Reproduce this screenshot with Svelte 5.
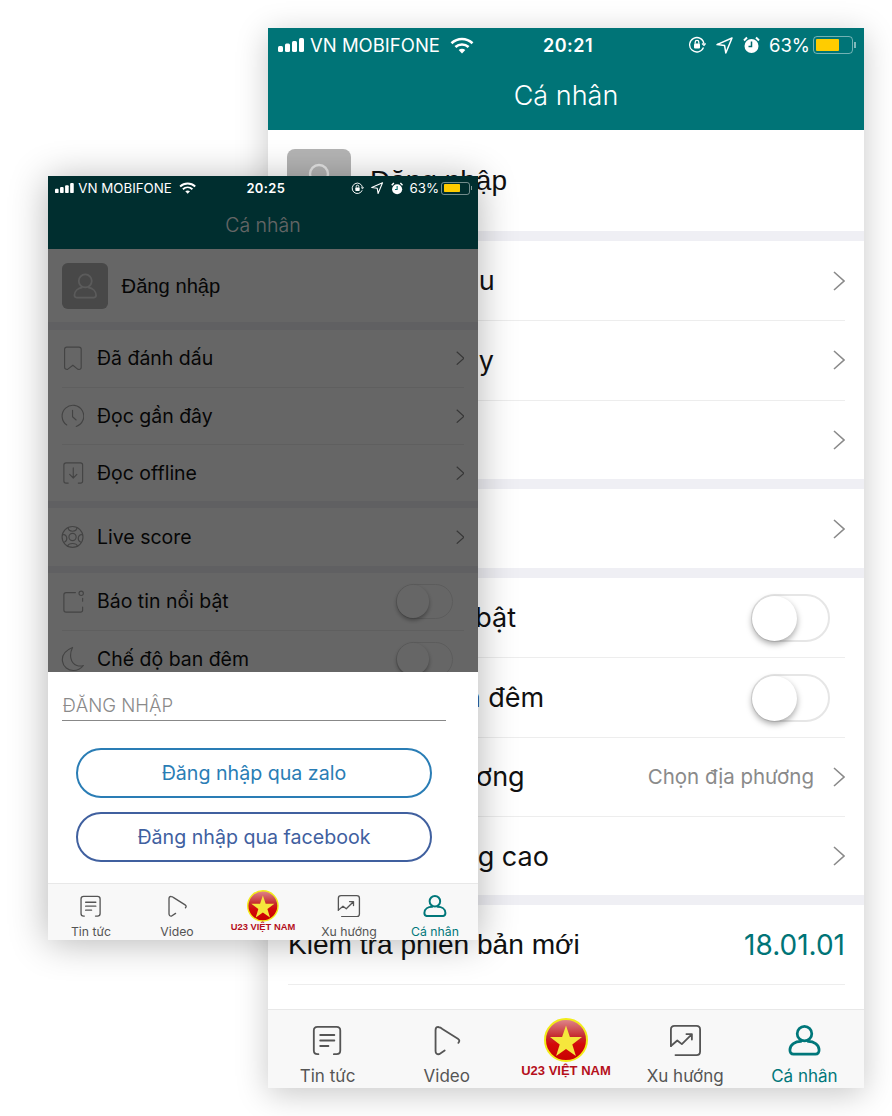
<script lang="ts">
  // Two overlapping phone screenshots: the profile tab, and in front of it
  // the same tab with the login sheet open. The small one is the same screen
  // at zoom 0.7215 so both share their row metrics.

  const navItems = [
    { label: 'Tin tức', icon: 'news' },
    { label: 'Video', icon: 'play' },
    { label: 'U23 VIỆT NAM', icon: 'logo' },
    { label: 'Xu hướng', icon: 'trend' },
    { label: 'Cá nhân', icon: 'user', active: true }
  ];
</script>

{#snippet statusbar(time)}
  <div class="status">
    <div class="status-left">
      <svg width="27" height="14" viewBox="0 0 27 14" fill="#fff">
        <rect x="0" y="8" width="5" height="6" rx="1.5" />
        <rect x="7" y="5.5" width="5" height="8.5" rx="1.5" />
        <rect x="14" y="3" width="5" height="11" rx="1.5" />
        <rect x="21" y="0" width="5" height="14" rx="1.5" />
      </svg>
      <span class="carrier">VN MOBIFONE</span>
      <svg class="wifi" width="24" height="17" viewBox="0 0 24 17" fill="none" stroke="#fff" stroke-width="2.6">
        <path d="M1.5 6.2C7.5 .6 16.5 .6 22.5 6.2" />
        <path d="M5.4 10C9.2 6.6 14.8 6.6 18.6 10" />
        <path d="M12 16.4L8.7 13C10.6 11.4 13.4 11.4 15.3 13Z" fill="#fff" stroke="none" />
      </svg>
    </div>
    <span class="time">{time}</span>
    <div class="status-right">
      <svg width="18" height="18" viewBox="0 0 18 18" fill="none" stroke="#fff" stroke-width="1.3">
        <path d="M15.5 11.5A7.2 7.2 0 1 1 16 8" />
        <path d="M14 7.6l2 1.8 1.6-2" />
        <rect x="6" y="7.6" width="6" height="5" rx="1" fill="#fff" stroke="none" />
        <path d="M7.2 7.8V6.2a1.8 1.8 0 0 1 3.6 0v1.6" />
      </svg>
      <svg class="loc" width="17" height="17" viewBox="0 0 17 17" fill="none" stroke="#fff" stroke-width="1.5" stroke-linejoin="round">
        <path d="M16 1L1 7.6 8.6 8.6 9.8 16Z" />
      </svg>
      <svg class="alarm" width="17" height="18" viewBox="0 0 17 18">
        <circle cx="8.5" cy="10" r="7" fill="#fff" />
        <path d="M8.5 5.5V10.5H5.5" fill="none" stroke="#00696d" stroke-width="1.5" />
        <path d="M1 4.5L4 1.5M16 4.5L13 1.5" stroke="#fff" stroke-width="2" />
      </svg>
      <span class="pct">63%</span>
      <div class="battery"><div class="charge"></div></div>
      <div class="nub"></div>
    </div>
  </div>
{/snippet}

{#snippet chevron()}
  <svg class="chev" width="12" height="20" viewBox="0 0 12 20" fill="none" stroke="#8a8a8a" stroke-width="1.6">
    <path d="M1 1l10 9-10 9" />
  </svg>
{/snippet}

{#snippet toggle()}
  <div class="toggle"><div class="knob"></div></div>
{/snippet}

{#snippet rowIcon(name)}
  <svg class="row-icon" width="32" height="36" viewBox="0 0 32 36" fill="none" stroke="#a8a8a8" stroke-width="1.6" stroke-linecap="round" stroke-linejoin="round">
    {#if name === 'bookmark'}
      <path d="M9 34c-2.500 0-4-1-4-3V6c0-2 1.500-3 3-3h17c1.500 0 3 1 3 3v25c0 2-1.500 3-3 3l-2-.5-6.500-5.500-7 5.500" />
    {:else if name === 'clock'}
      <path d="M8 30.500A15 15 0 1 1 21 32.500" />
      <path d="M16 10v9l5 4.500" />
    {:else if name === 'down'}
      <path d="M10 32H7c-2 0-3-1-3-3V7c0-2 1-3 3-3h20c2 0 3 1 3 3v22c0 2-1 3-3 3h-3" />
      <path d="M17 11v14m-5-5l5 5 5-5" />
    {:else if name === 'ball'}
      <circle cx="16" cy="18" r="14.500" />
      <circle cx="16" cy="18" r="5" />
      <path d="M10 5c0 3 2 5 6 5s6-2 6-5M2.500 15c3-1 5 1 5.500 4s-.5 5-3 6M29.500 15c-3-1-5 1-5.500 4s.5 5 3 6M9 31c1-3 4-4 7-4s6 1 7 4" />
    {:else if name === 'note'}
      <path d="M20 5H7c-2 0-3 1-3 3v21c0 2 1 3 3 3h20c2 0 3-1 3-3v-4" />
      <circle cx="28" cy="6" r="3" />
      <path d="M30 13v4" />
    {:else if name === 'moon'}
      <path d="M16 2C6 6 1 13 2 21c1 8 8 13 15 13 6 0 11-3 14-7-3 1-6 1-9 0C13 24 11 12 16 2Z" />
    {/if}
  </svg>
{/snippet}

{#snippet navIcon(name)}
  {#if name === 'logo'}
    <svg class="logo" width="44" height="44" viewBox="0 0 44 44">
      <defs>
        <linearGradient id="flag" x1="0" y1="0" x2="0" y2="1">
          <stop offset="0" stop-color="#e08a8e" />
          <stop offset=".42" stop-color="#c52a2e" />
          <stop offset=".6" stop-color="#d40a0a" />
          <stop offset="1" stop-color="#c80000" />
        </linearGradient>
      </defs>
      <circle cx="22" cy="22" r="21" fill="url(#flag)" stroke="#f2ec18" stroke-width="2" />
      <path d="M22 7.500l3.900 11.500 12.100.1-9.700 7.300 3.600 11.600L22 31.100l-9.900 6.900 3.600-11.600-9.700-7.300 12.100-.1Z" fill="#f5e73c" />
    </svg>
  {:else}
    <svg width="33" height="31" viewBox="0 0 36 34" fill="none" stroke="currentColor" stroke-width={name === 'user' ? 3 : 2} stroke-linecap="round" stroke-linejoin="round">
      {#if name === 'news'}
        <path d="M8 32H7c-2.500 0-4-1.500-4-4V6c0-2.500 1.500-4 4-4h21c2.500 0 4 1.500 4 4v22c0 2.500-1.500 4-4 4h-3" />
        <path d="M10 11h15.500M10 17h15.500M10 23h9" />
      {:else if name === 'play'}
        <path d="M9 2c-2 0-3 1.500-3 3.500v23C6 31 7.500 32.500 10 32l6-4M9.500 2.500c1.500 0 2.500.5 3.500 1.500l17.500 11c2 1.300 2 3 .5 4.500" />
      {:else if name === 'trend'}
        <path d="M2 24V6c0-2.500 1.500-4 4-4h24c2.500 0 4 1.500 4 4v24c0 2.500-1.500 4-4 4H7" transform="translate(0 -1)" />
        <path d="M2 23l7-6 5 4 10-10M19 10h6v6" />
      {:else if name === 'user'}
        <circle cx="18" cy="9.500" r="8" />
        <path d="M14 18c-6 0-12 3-12 9.500 0 3 1.500 4.500 4 4.500h24c2.500 0 4-1.500 4-4.500C34 21 28 18 22 18" />
      {/if}
    </svg>
  {/if}
{/snippet}

{#snippet screen(time)}
  <div class="top">
    {@render statusbar(time)}
    <div class="title">Cá nhân</div>
  </div>

  <div class="list">
    <div class="profile">
      <div class="avatar">
        <svg width="34" height="36" viewBox="0 0 34 36" fill="none" stroke="#e4e4e4" stroke-width="2.4">
          <circle cx="17" cy="11" r="9" />
          <path d="M13 20C7 21 2 25 2 31c0 2 1 3 3 3h24c2 0 3-1 3-3 0-6-5-10-11-11" />
        </svg>
      </div>
      <span class="profile-text">Đăng nhập</span>
    </div>
    <div class="gap"></div>

    <div class="row">{@render rowIcon('bookmark')}<span class="label">Đã đánh dấu</span>{@render chevron()}</div>
    <div class="row">{@render rowIcon('clock')}<span class="label">Đọc gần đây</span>{@render chevron()}</div>
    <div class="row">{@render rowIcon('down')}<span class="label">Đọc offline</span>{@render chevron()}</div>
    <div class="gap"></div>

    <div class="row">{@render rowIcon('ball')}<span class="label">Live score</span>{@render chevron()}</div>
    <div class="gap"></div>

    <div class="row">{@render rowIcon('note')}<span class="label">Báo tin nổi bật</span>{@render toggle()}</div>
    <div class="row">{@render rowIcon('moon')}<span class="label">Chế độ ban đêm</span>{@render toggle()}</div>
    <div class="row"><span class="label plain">Tin địa phương</span><span class="value">Chọn địa phương</span>{@render chevron()}</div>
    <div class="row"><span class="label plain">Cài đặt nâng cao</span>{@render chevron()}</div>
    <div class="gap"></div>

    <div class="row version"><span class="label plain wide">Kiểm tra phiên bản mới</span><span class="build">18.01.01</span></div>
  </div>

  <nav class="tabs">
    {#each navItems as item}
      <div class="tab" class:active={item.active} class:brand={item.icon === 'logo'}>
        {@render navIcon(item.icon)}
        <span>{item.label}</span>
      </div>
    {/each}
  </nav>
{/snippet}

<main class="canvas">
  <section class="phone big">
    {@render screen('20:21')}
  </section>

  <section class="phone small">
    {@render screen('20:25')}
    <div class="dim"></div>
    <div class="sheet">
      <div class="sheet-title">ĐĂNG NHẬP</div>
      <button type="button" class="login zalo">Đăng nhập qua zalo</button>
      <button type="button" class="login fb">Đăng nhập qua facebook</button>
    </div>
  </section>
</main>

<style>
  :global(body) {
    background: #fff;
  }

  .canvas {
    position: relative;
    width: 892px;
    height: 1116px;
    overflow: hidden;
    font-family: "Liberation Sans", Arial, sans-serif;
  }

  .phone {
    position: absolute;
    width: 596px;
    height: 1060px;
    display: flex;
    flex-direction: column;
    background: #fff;
    overflow: hidden;
  }

  .big {
    left: 268px;
    top: 28px;
    box-shadow: 0 6px 30px rgba(0, 0, 0, 0.22);
    overflow: visible;
  }

  .small {
    zoom: 0.7215;
    left: 66.5px;
    top: 244px;
    height: 1059px;
    box-shadow: 0 4px 50px rgba(0, 0, 0, 0.3);
  }

  .top {
    height: 101.5px;
    flex: none;
    background: #007477;
    color: #fff;
  }

  .status {
    position: relative;
    z-index: 3;
    height: 34px;
    padding: 0 8px 0 10px;
    display: grid;
    grid-template-columns: 1fr 1fr;
    align-items: center;
    font-family: Inter, "Liberation Sans", sans-serif;
    font-size: 18.5px;
    color: #fff;
  }

  .status-left {
    display: flex;
    align-items: center;
    gap: 5px;
  }

  .wifi {
    margin-left: 5px;
  }

  .time {
    position: absolute;
    left: 275px;
    font-size: 18px;
    font-weight: 600;
    letter-spacing: 0.5px;
  }

  .status-right {
    display: flex;
    align-items: center;
    justify-content: flex-end;
    gap: 10px;
  }

  .pct {
    margin-left: -1px;
    margin-right: -7px;
  }

  .battery {
    width: 40px;
    height: 18px;
    border: 1px solid rgba(255, 255, 255, 0.45);
    border-radius: 4px;
    padding: 2px;
    box-sizing: border-box;
  }

  .charge {
    width: 23px;
    height: 100%;
    background: #fc0;
    border-radius: 1px;
  }

  .nub {
    width: 2px;
    height: 6px;
    margin-left: -9px;
    background: rgba(255, 255, 255, 0.5);
  }

  .title {
    height: 67px;
    display: flex;
    align-items: center;
    justify-content: center;
    font-size: 27px;
    font-family: Inter, "Liberation Sans", sans-serif;
    font-weight: 300;
  }

  .list {
    flex: 1;
    display: flex;
    flex-direction: column;
    background: #fff;
    color: #111;
  }

  .profile {
    height: 101.5px;
    flex: none;
    box-sizing: border-box;
    padding: 1.5px 0 0 19px;
    display: flex;
    align-items: center;
    gap: 19px;
    font-size: 28px;
  }

  .avatar {
    width: 64px;
    height: 64px;
    border-radius: 8px;
    background: #b4b4b4;
    display: flex;
    align-items: center;
    justify-content: center;
  }

  .gap {
    height: 10px;
    background: #efeff4;
    flex: none;
  }

  .row {
    height: 79.3px;
    flex: none;
    box-sizing: border-box;
    margin: 0 19px 0 20px;
    display: flex;
    align-items: center;
    font-size: 26px;
  }

  .row + .row {
    border-top: 1px solid #ededed;
  }

  .row.version {
    height: 80px;
    border-bottom: 1px solid #ededed;
  }

  .row-icon {
    flex: none;
    margin-left: -2px;
    margin-right: 18px;
  }

  .big .row-icon {
    margin-right: 15.5px;
  }

  .label {
    flex: 1;
    font-family: Inter, "Liberation Sans", sans-serif;
    font-size: 27px;
  }

  .label.plain {
    padding-left: 45.5px;
  }

  .label.wide {
    padding-left: 0;
    font-family: "Liberation Sans", Arial, sans-serif;
    font-size: 28.1px;
  }

  .value {
    font-family: Inter, "Liberation Sans", sans-serif;
    font-size: 20.5px;
    color: #8a8a8a;
    margin-right: 19px;
  }

  .build {
    font-family: Inter, "Liberation Sans", sans-serif;
    font-size: 28px;
    color: #007477;
  }

  .chev {
    flex: none;
  }

  .toggle {
    position: relative;
    width: 79px;
    height: 48px;
    box-sizing: border-box;
    margin-right: 15px;
    border: 2px solid #e6e6e6;
    border-radius: 24px;
    flex: none;
  }

  .knob {
    position: absolute;
    left: -1px;
    top: 0;
    width: 45px;
    height: 45px;
    border-radius: 50%;
    background: #fff;
    box-shadow: 0 3px 6px rgba(0, 0, 0, 0.35);
  }

  .tabs {
    position: relative;
    z-index: 3;
    height: 79px;
    flex: none;
    box-sizing: border-box;
    display: grid;
    grid-template-columns: repeat(5, 1fr);
    padding: 0;
    background: #f8f8f8;
    border-top: 1px solid #e8e8e8;
    font-family: Inter, "Liberation Sans", sans-serif;
  }

  .tab {
    display: flex;
    flex-direction: column;
    align-items: center;
    padding-top: 15px;
    font-size: 17px;
    color: #555;
  }

  .tab span {
    margin-top: 10px;
    white-space: nowrap;
  }

  .tab.active {
    color: #00777a;
  }

  .tab.brand {
    padding-top: 8px;
  }

  .tab.brand span {
    margin-top: 1px;
    font-family: "Liberation Sans", Arial, sans-serif;
    font-size: 13px;
    font-weight: 700;
    color: #b5101c;
  }

  .dim {
    position: absolute;
    inset: 0;
    z-index: 1;
    background: rgba(0, 0, 0, 0.6);
  }

  .sheet {
    position: absolute;
    z-index: 2;
    left: 0;
    right: 0;
    bottom: 79px;
    height: 292px;
    box-sizing: border-box;
    background: #fff;
    padding: 0 44px 0 20px;
    font-family: Inter, "Liberation Sans", sans-serif;
    display: flex;
    flex-direction: column;
    align-items: stretch;
  }

  .sheet-title {
    height: 68px;
    box-sizing: border-box;
    padding-top: 30px;
    border-bottom: 2px solid #888;
    font-size: 25.7px;
    color: #8a8a8a;
    font-weight: 300;
  }

  .login {
    appearance: none;
    height: 69px;
    margin: 0 0 0 19px;
    width: 493px;
    background: #fff;
    border: 3px solid;
    border-radius: 35px;
    font-family: inherit;
    font-size: 27.2px;
    padding: 0;
  }

  .zalo {
    margin-top: 37px;
    color: #2a7db5;
    border-color: #2a7db5;
  }

  .fb {
    margin-top: 20px;
    color: #40609f;
    border-color: #40609f;
  }
</style>
